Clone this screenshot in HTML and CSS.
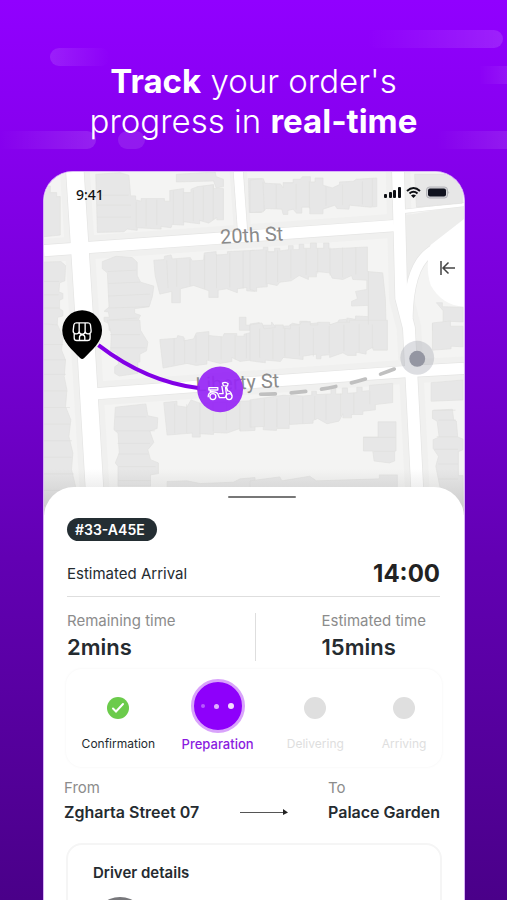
FILE: index.html
```html
<!DOCTYPE html>
<html lang="en">
<head>
    <meta charset="UTF-8">
    <meta name="viewport" content="width=device-width, initial-scale=1.0">
    <title>Track your order</title>
    <link rel="stylesheet" href="styles.css">
</head>
<body>

    <header class="hero">
        <span class="streak streak-1"></span>
        <span class="streak streak-2"></span>
        <span class="streak streak-3"></span>
        <span class="streak streak-4"></span>
        <span class="streak streak-5"></span>
        <span class="streak streak-6"></span>
        <h1><b>Track</b> your order's<br>progress in <b>real-time</b></h1>
    </header>

    <main class="phone">
        <!-- map -->
        <section class="map-area">
            <svg class="map" viewBox="0 0 1266 1035" preserveAspectRatio="xMidYMin slice">
                <defs>
                    <linearGradient id="fade" x1="0" y1="0" x2="0" y2="1">
                        <stop offset="0" stop-color="#999" stop-opacity="0"/>
                        <stop offset="1" stop-color="#999" stop-opacity=".4"/>
                    </linearGradient>
                </defs>
                <rect width="1266" height="1035" fill="#f4f4f3"/>

                <!-- pavements -->
                <g class="kerb">
                    <path stroke-width="90" d="M92-20 120 417 158 1050"/>
                    <path stroke-width="72" d="M0 237 1055 162"/>
                    <path stroke-width="72" d="M130 670 480 645 1090 602 1266 592"/>
                    <path stroke-width="74" d="M1067-10 1077 380 1100 470 1130 1050"/>
                    <path stroke-width="52" d="M585-10 600 200"/>
                </g>
                <path fill="#ededec" d="M1090 130 1266 100V180L1170 250 1125 300 1100 390 1085 360z"/>

                <!-- roads -->
                <g class="road road-edge">
                    <path stroke-width="57" d="M92-20 120 417 158 1050"/>
                    <path stroke-width="38" d="M0 237 1055 162"/>
                    <path stroke-width="38" d="M130 670 480 645 1090 602 1266 592"/>
                    <path stroke-width="40" d="M1067-10 1077 380 1100 470 1130 1050"/>
                    <path stroke-width="32" d="M585-10 600 200"/>
                    <path stroke-width="32" d="M1097 440Q1100 290 1160 244L1270 160"/>
                    <path stroke-width="14" d="M1080 119 1266 98"/>
                </g>
                <g class="road">
                    <path stroke-width="53" d="M92-20 120 417 158 1050"/>
                    <path stroke-width="34" d="M0 237 1055 162"/>
                    <path stroke-width="34" d="M130 670 480 645 1090 602 1266 592"/>
                    <path stroke-width="36" d="M1067-10 1077 380 1100 470 1130 1050"/>
                    <path stroke-width="28" d="M585-10 600 200"/>
                    <path stroke-width="28" d="M1097 440Q1100 290 1160 244L1270 160"/>
                    <path stroke-width="10" d="M1080 119 1266 98"/>
                </g>
                <path fill="#fff" d="M1266 142 1165 220Q1148 290 1166 342 1200 402 1266 406z"/>

                <!-- buildings, north west -->
                <g class="building" transform="translate(-9 -18)">
                    <path d="M0 60H28V80H47V92H58V208L0 214z"/>
                    <path d="M165 25 238 20 265 28 270 90H285V102L302 106V98H372V106H388V74L430 68V80H452V70L472 62 520 56V68H550V162H530V155L506 172 478 164V174L430 168V178L395 176 392 186 362 182V190L290 186V194L260 190 250 198 170 200z"/>
                    <path d="M408 25 525 18 528 32 550 40V62L528 66 520 45 408 48z"/>
                    <path d="M625 38H665V140H628z"/>
                    <path d="M0 290 60 288 74 300 72 346 56 352 54 380 66 384V400L56 404V430L66 436V452L50 456 48 495H0z"/>
                    <path d="M185 288 226 272 275 276 290 290V330L300 350 340 362 336 392 326 424 282 430V444L300 450 290 470V495H205V475L190 468V456H206L203 440 190 438 205 425 200 322 185 310z"/>
                    <path d="M340 284 372 282V272L392 268 396 280 450 276 456 286 490 284 492 262 528 258V268L562 266V258L645 254V378L620 376V366L592 370V382L560 370 534 374V396H506V376L460 360 420 370V412H394V378L358 386 344 330z"/>
                    <path d="M598 456H618V480H645V495H598z"/>
                </g>

                <!-- north east -->
                <g class="building" transform="translate(621 -18)">
                    <path d="M0 42 40 38 45 52 92 54 100 66V50H130V40H152L158 32H182V48H196V36H220V58L248 66 270 56V48L312 46 320 40 382 36V122L362 124 300 118 298 130 262 128 256 118 220 130V144H180V124H156V142H140L130 130 114 134V146H100L96 130 48 128 40 138 0 140z"/>
                    <path d="M496 25H600L640 70V112L502 124z"/>
                    <path d="M0 255 40 252V245H54V258H74V248H90V256L116 252V240H130V252H148V236H162V248H182V232H200V248H222V232H238V250L354 244V318L400 322 408 400 410 480 380 484V495H0V476L28 472V480H65V470L76 484 116 482 128 474 150 478V468H172V476L212 472V480L262 476 268 464 290 462 292 470V458L318 462V452L356 454V420L306 422V408L324 400 318 378 352 372V344L310 342 306 330 280 342 248 338 240 322 200 318V334H176V342L148 330 124 346 90 350 82 360 52 354V364L20 366V378L0 372z"/>
                    <path d="M562 412H580V424L642 426V470L600 468V495H550V475H582V436z"/>
                </g>

                <!-- south west -->
                <g class="building" transform="translate(-9 447)">
                    <path d="M0 10 50 14 66 50 62 90 74 120 70 170 78 210 74 260 90 300 84 350 96 400 92 450 104 500V560H0z"/>
                    <path d="M200 0H298L300 30 322 66 318 92 298 102V126H292V160L236 168 222 160V140L234 132 228 98 210 92 212 40z"/>
                    <path d="M358 58 410 54 412 46 430 50V62L460 56 468 38 506 34V46L548 50 552 40H590V48H612V42L645 34V118L600 124 575 112V124L540 130 500 120V132L468 136 440 130 368 144z"/>
                    <path d="M224 262 316 252 322 288 352 294 350 326 328 334 340 368 322 390 330 420 354 430V462L330 466V500H232V440L224 430 236 400 232 340 220 330z"/>
                    <path d="M370 248 410 244V258L440 262 452 240 480 250 645 242V332L600 334V326L560 340 520 338V344L480 342V352H456V340L380 346z"/>
                    <path d="M380 486 440 484 480 492 580 488 600 478 645 474V560H380z"/>
                </g>

                <!-- south east -->
                <g class="building" transform="translate(621 447)">
                    <path d="M0 14 36 8 42 26 76 22V14H100V24L122 26V14H150L156 4H182V14H204V6H240V14L262 6H300V0H414V90H372V80L350 92V102L320 96V106H294L280 98 240 112V104L214 106V116H200V102L160 108V118L100 112 92 124 46 120V128L0 122z"/>
                    <path d="M550 8 604 2V18H642V80L606 78V86L550 90z"/>
                    <path d="M0 240 100 226 160 228 186 226V214H200V224L244 222V206H258V222H278V204H294V220L322 218V202H338V214L360 212V196L430 190V248L378 254V270L340 274V284H306V294H280V282L268 304 232 312 204 296 190 302V310L118 314V326H80V332L40 330V320L0 322z"/>
                    <path d="M386 306H440V394H436V424L420 430 374 424 370 394H342V352H386z"/>
                    <path d="M546 188 642 180V240L546 244z"/>
                    <path d="M550 272 610 268 614 300 622 304 626 352 642 358V390L628 396V468H642V560H580L572 500 560 440 568 410 552 386V360L570 352 564 304 550 296z"/>
                    <path d="M0 484 90 472 96 484 180 470 200 484 390 478V466H444V520H0z"/>
                </g>

                <!-- lot lines between the houses -->
                <g class="lots">
                    <path d="M158 70H255M160 100H262M160 136H262M278 90V168M308 82V164M340 84V160M390 58V156M420 60V152M450 54V148M480 44V146M510 42V144"/>
                    <path d="M660 30 664 116M700 38V110M760 36V112M800 28V110M850 44V102M900 38V100M960 28V98M990 20V102"/>
                    <path d="M0 330H46M0 370H44M0 410H46M192 300 278 296M194 336 290 332M194 374 320 368M194 410 316 406M196 446 282 440"/>
                    <path d="M370 266 374 350M400 264V346M440 262V342M484 250V352M520 248V350M560 244V348M600 240V352M670 236V338M704 236V332M744 234V320M790 232V310M825 230V306M862 228V312M900 228V318M940 226V308M978 300V460"/>
                    <path d="M0 520H58M0 566H66M0 610H66M0 660H70M0 710H78M0 760H78M0 810H84M0 860H84M0 910H90M0 960H94"/>
                    <path d="M200 490H290M200 530H306M216 738H308M216 780H334M222 818H320M224 850H314M226 888H336M224 930H320"/>
                    <path d="M392 502V580M424 500V576M458 492V574M496 492V568M534 496V566M576 492V566M610 488V562M650 472V560M690 474V564M726 470V556M770 466V554M812 470V556M860 464V546M904 460V540M950 458V542M990 460V534"/>
                    <path d="M394 698V788M430 700V786M470 696V790M510 694V782M550 692V778M590 690V780M624 690V770M664 684V768M702 682V770M740 680V760M780 678V758M816 676V746M850 672V748M894 668V736M934 666V728M982 662V700"/>
                    <path d="M1174 718H1240M1188 748H1242M1184 798H1246M1176 836H1248M1188 880H1248M1190 925H1248M962 800H1060M994 842H1056"/>
                </g>

                <!-- street names -->
                <text class="street" transform="translate(532 216) rotate(-3)">20th St</text>
                <text class="street" transform="translate(458 662) rotate(-3)">Liberty St</text>

                <!-- route -->
                <path fill="none" stroke="#8200e6" stroke-width="12" d="M164 522Q310 634 470 652"/>
                <path class="route-left" d="M653 670Q880 668 1075 586"/>

                <!-- customer -->
                <circle cx="1125" cy="560" r="51" fill="#9a9daa" opacity=".34"/>
                <circle cx="1125" cy="563" r="24" fill="#9496a2"/>

                <!-- shop pin -->
                <path fill="#000" d="M115 417a60 60 0 0 1 60 60c0 36-30 58-54 84q-6 6-12 0c-24-26-54-48-54-84a60 60 0 0 1 60-60z"/>
                <g class="icon-line">
                    <path d="M97 455H133Q139 455 140 461L142 478A9 9 0 0 1 124 480 9 9 0 0 1 106 480 9 9 0 0 1 88 478L90 461Q91 455 97 455zM106 480V455M124 480V455M91 488V500Q91 508 99 508H131Q139 508 139 500V488M107 507V498Q107 491 115 491 123 491 123 498V507"/>
                </g>

                <!-- rider -->
                <circle cx="531" cy="655" r="69" fill="#9727f5" opacity=".93"/>
                <g class="icon-line">
                    <path d="M497 650H524V657H497zM502 657V663M499 663Q524 660 526 674L529 680H544Q549 680 550 670L547 648M495 679Q494 665 507 663M538 636Q548 631 555 638L553 645 541 644zM549 645 554 660Q564 661 566 674M527 668H540L536 645"/>
                    <circle cx="509" cy="677" r="9"/>
                    <circle cx="558" cy="677" r="9"/>
                </g>

                <rect y="895" width="1266" height="140" fill="url(#fade)"/>
            </svg>

            <div class="status-bar">
                <span class="clock">9:41</span>
                <svg class="status-icons" width="66" height="14" viewBox="0 0 66 14">
                    <g fill="#0d0f14">
                        <rect x="0" y="8" width="3" height="4" rx="1"/>
                        <rect x="5" y="6" width="3" height="6" rx="1"/>
                        <rect x="9" y="4" width="3" height="8" rx="1"/>
                        <rect x="14" y="1" width="3" height="11" rx="1"/>
                    </g>
                    <g fill="none" stroke="#0d0f14" stroke-width="2">
                        <path d="M23 5Q29.500-1 36 5"/>
                        <path d="M25.500 7.500Q29.500 4 33.500 7.500"/>
                    </g>
                    <path fill="#0d0f14" d="M27 9.500Q29.500 7.500 32 9.500L29.500 12z"/>
                    <rect x="42.500" y="1" width="21" height="11" rx="3" fill="#d5d5d9" stroke="#b5b5ba"/>
                    <rect x="44" y="2.500" width="18" height="8" rx="2" fill="#11131f"/>
                    <path fill="#a5a5aa" d="M64.500 5Q66 6.500 64.500 8z"/>
                </svg>
            </div>

            <button class="collapse" type="button" aria-label="Collapse">
                <svg width="15" height="14" viewBox="0 0 15 14" fill="none" stroke="#444" stroke-width="1.500">
                    <path d="M1 0V14M15 7H3M8.500 1.500 3 7 8.500 12.500"/>
                </svg>
            </button>
        </section>

        <!-- order sheet -->
        <section class="sheet">
            <div class="handle"></div>
            <span class="badge">#33-A45E</span>

            <div class="arrival">
                <span>Estimated Arrival</span>
                <strong>14:00</strong>
            </div>

            <div class="times">
                <div class="time">
                    <span class="label">Remaining time</span>
                    <strong>2mins</strong>
                </div>
                <div class="time time-total">
                    <span class="label">Estimated time</span>
                    <strong>15mins</strong>
                </div>
            </div>

            <ol class="steps">
                <li class="step done">
                    <span class="dot">
                        <svg width="14" height="12" viewBox="0 0 14 12" fill="none" stroke="#fff" stroke-width="2" stroke-linecap="round">
                            <path d="M2 6.500 5 9.500 12 2"/>
                        </svg>
                    </span>
                    <span>Confirmation</span>
                </li>
                <li class="step active">
                    <span class="dot"><i></i><i></i><i></i></span>
                    <span>Preparation</span>
                </li>
                <li class="step">
                    <span class="dot"></span>
                    <span>Delivering</span>
                </li>
                <li class="step">
                    <span class="dot"></span>
                    <span>Arriving</span>
                </li>
            </ol>

            <div class="route">
                <div class="place">
                    <span class="label">From</span>
                    <strong>Zgharta Street 07</strong>
                </div>
                <svg class="arrow" width="48" height="6" viewBox="0 0 48 6">
                    <path stroke="#555" d="M0 3.500H44"/>
                    <path fill="#222" d="M43 0 48 3.500 43 6z"/>
                </svg>
                <div class="place">
                    <span class="label">To</span>
                    <strong>Palace Garden</strong>
                </div>
            </div>

            <div class="driver">
                <h2>Driver details</h2>
                <div class="avatar"></div>
            </div>
        </section>
    </main>

</body>
</html>
```
FILE: styles.css
```css
* {
    box-sizing: border-box;
}

body {
    margin: 0;
    height: 100vh;
    overflow: hidden;
    display: flex;
    flex-direction: column;
    font-family: Inter, 'Liberation Sans', sans-serif;
    color: #252b30;
    background: linear-gradient(#9100ff 0%, #8500ec 18%, #7600d4 38%, #6200b3 62%, #4a0089 100%);
}

/* heading */
.hero {
    position: relative;
    flex: none;
    padding: 61px 0 30px;
    text-align: center;
    color: #fff;
}

h1 {
    position: relative;
    margin: 0;
    font-size: 33px;
    line-height: 40px;
    font-weight: 300;
}

h1 b {
    font-weight: 700;
}

.streak {
    position: absolute;
    height: 18px;
    border-radius: 9px;
}

.streak-1 {
    top: 48px;
    left: 50px;
    width: 60px;
    background: linear-gradient(90deg, rgba(255, 255, 255, 0.12), transparent);
}

.streak-2 {
    top: 30px;
    right: 4px;
    width: 136px;
    background: linear-gradient(270deg, rgba(255, 255, 255, 0.13), transparent);
}

.streak-3 {
    top: 66px;
    right: 0;
    width: 28px;
    border-radius: 0;
    background: linear-gradient(270deg, rgba(255, 255, 255, 0.08), transparent);
}

.streak-4 {
    top: 131px;
    left: 0;
    width: 96px;
    border-radius: 0 9px 9px 0;
    background: linear-gradient(270deg, rgba(255, 255, 255, 0.13), transparent);
}

.streak-5 {
    top: 131px;
    left: 118px;
    width: 27px;
    background: rgba(255, 255, 255, 0.1);
}

.streak-6 {
    top: 131px;
    right: 0;
    width: 70px;
    border-radius: 0;
    background: linear-gradient(270deg, rgba(255, 255, 255, 0.1), transparent);
}

/* phone */
.phone {
    flex: 1;
    min-height: 0;
    margin: 0 42px 0 43px;
    display: flex;
    flex-direction: column;
    overflow: hidden;
    border-radius: 30px 30px 0 0;
    background: #fff;
    border: 1px solid #d9b3f7;
    border-bottom: 0;
}

.map-area {
    position: relative;
    flex: none;
}

.map {
    display: block;
    width: 100%;
}

.kerb path {
    fill: none;
    stroke: #f0f0ef;
}

.road path {
    fill: none;
    stroke: #fff;
}

.road-edge path {
    stroke: #e5e5e4;
}

.building path {
    fill: #e7e7e7;
    stroke: #e0e0df;
    stroke-width: 2;
}

.lots path {
    fill: none;
    stroke: #dfdfde;
    stroke-width: 2;
}

.street {
    font-family: Roboto, sans-serif;
    font-size: 60px;
    fill: #8b8b8b;
}

.route-left {
    fill: none;
    stroke: #c0c0c0;
    stroke-width: 11;
    stroke-linecap: round;
    stroke-dasharray: 44 48;
}

.icon-line {
    fill: none;
    stroke: #fff;
    stroke-width: 4;
    stroke-linejoin: round;
}

.status-bar {
    position: absolute;
    top: 13px;
    left: 32px;
    right: 14px;
    display: flex;
    justify-content: space-between;
    align-items: center;
}

.clock {
    font-family: 'Noto Sans', sans-serif;
    font-size: 14px;
    line-height: 20px;
    font-weight: 500;
    color: #111;
}

.status-icons {
    margin-bottom: 4px;
}

.collapse {
    position: absolute;
    top: 78px;
    right: 0;
    width: 36px;
    height: 36px;
    padding: 0 8px 0 12px;
    display: flex;
    align-items: center;
    border: 0;
    background: none;
}

/* sheet */
.sheet {
    position: relative;
    flex: 1;
    margin-top: -28px;
    padding: 9px 22px 0;
    border-radius: 30px 30px 0 0;
    background: #fff;
}

.handle {
    width: 68px;
    height: 2px;
    margin: 0 0 20px 43%;
    border-radius: 1px;
    background: #777;
}

.badge {
    display: inline-block;
    margin-left: 1px;
    padding: 0 12px 0 8px;
    border-radius: 12px;
    background: #242e33;
    color: #fff;
    font-size: 14px;
    line-height: 23px;
    font-weight: 600;
}

.arrival {
    display: flex;
    justify-content: space-between;
    align-items: center;
    height: 46px;
    margin: 10px 2px 0 1px;
    border-bottom: 1px solid #dedede;
    font-size: 15px;
    line-height: 24px;
}

.arrival strong {
    font-size: 24px;
    color: #222;
}

.times {
    display: grid;
    grid-template-columns: 1fr 1fr;
    margin: 16px 0 8px 1px;
}

.label {
    font-size: 15px;
    line-height: 20px;
    color: #8c8c8c;
}

.time {
    display: flex;
    flex-direction: column;
    justify-content: center;
    height: 48px;
}

.time strong {
    font-size: 22px;
    line-height: 32px;
    font-weight: 600;
}

.time-total {
    padding-left: 66px;
    border-left: 1px solid #dedede;
}

.steps {
    display: grid;
    grid-template-columns: 105fr 94fr 102fr 76fr;
    height: 98px;
    margin: 0;
    padding: 0 0 14px;
    list-style: none;
    border-radius: 16px;
    box-shadow: 0 0 3px rgba(0, 0, 0, 0.05);
}

.step {
    display: flex;
    flex-direction: column;
    align-items: center;
    justify-content: flex-end;
    gap: 16px;
    font-size: 12px;
    line-height: 18px;
    color: #dedede;
}

.dot {
    display: flex;
    align-items: center;
    justify-content: center;
    width: 22px;
    height: 22px;
    border-radius: 50%;
    background: #dfdfdf;
}

.done {
    color: #252b30;
}

.done .dot {
    background: #6bcb4b;
}

.active {
    gap: 2px;
    font-size: 13px;
    font-weight: 500;
    color: #8a1be0;
}

.active .dot {
    gap: 9px;
    width: 54px;
    height: 54px;
    border: 3px solid #d9a3fb;
    background: #8e00fb;
}

.dot i {
    width: 6px;
    height: 6px;
    border-radius: 50%;
    background: #f3dcff;
}

.dot i:first-child {
    width: 4px;
    height: 4px;
    opacity: 0.4;
}

.dot i:nth-child(2) {
    width: 5px;
    height: 5px;
    opacity: 0.8;
}

.route {
    display: flex;
    justify-content: space-between;
    margin: 11px 2px 0 -2px;
}

.place {
    display: flex;
    flex-direction: column;
}

.place strong {
    font-size: 16px;
    line-height: 28px;
    font-weight: 600;
}

.arrow {
    margin-top: 31px;
}

.driver {
    height: 140px;
    margin-top: 17px;
    padding: 16px 25px;
    border: 2px solid #f5f5f5;
    border-radius: 16px;
}

h2 {
    margin: 0;
    font-size: 15px;
    line-height: 24px;
    font-weight: 600;
}

.avatar {
    width: 54px;
    height: 54px;
    margin-top: 12px;
    border-radius: 50%;
    background: #77777b;
}
```
